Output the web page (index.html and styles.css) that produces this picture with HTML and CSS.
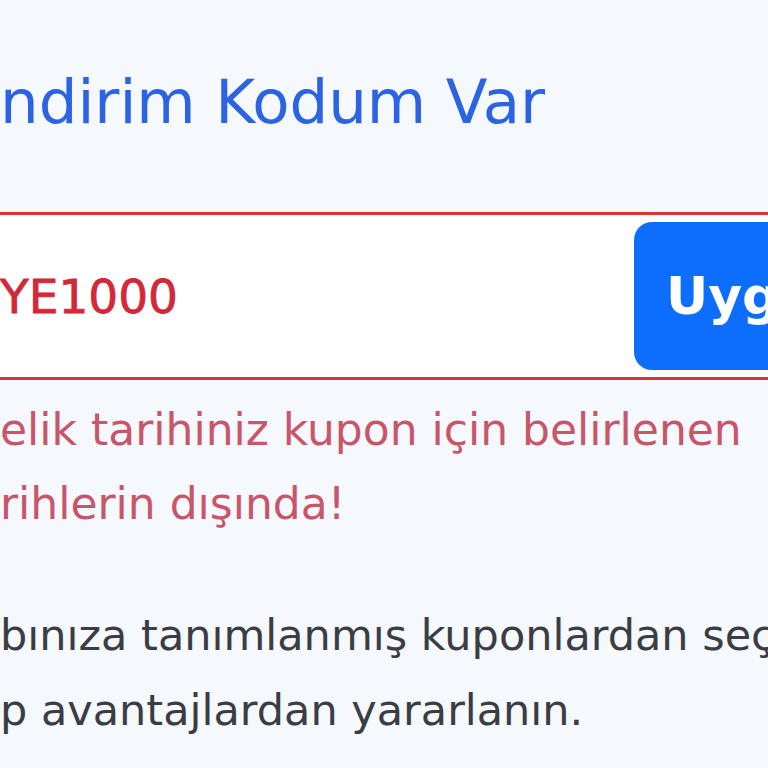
FILE: index.html
```html
<!DOCTYPE html>
<html lang="tr">
<head>
<meta charset="utf-8">
<link rel="stylesheet" href="styles.css">
</head>
<body>
<div class="page">
  <h2 class="title">ndirim Kodum Var</h2>
  <div class="coupon">
    <div class="code">YE1000</div>
    <button class="apply">Uygula</button>
  </div>
  <p class="error">elik tarihiniz kupon için belirlenen<br>rihlerin dışında!</p>
  <p class="desc">bınıza tanımlanmış kuponlardan seçip<br>p avantajlardan yararlanın.</p>
</div>
</body>
</html>
```
FILE: styles.css
```css
html, body {
  margin: 0;
  padding: 0;
  background: #f5f8fc;
  overflow: hidden;
  width: 768px;
  height: 768px;
}
.page {
  font-family: "DejaVu Sans", sans-serif;
  width: 1000px;
  padding-top: 62px;
}
.title {
  margin: 0;
  font-size: 61px;
  font-weight: 500;
  color: #2b63e3;
  line-height: 80px;
  white-space: nowrap;
}
.coupon {
  margin-top: 70px;
  margin-left: -20px;
  height: 162px;
  border-top: 3px solid #d8343c;
  border-bottom: 3px solid #d8343c;
  background: #ffffff;
  display: flex;
  align-items: center;
  padding-left: 20px;
}
.code {
  width: 634px;
  font-size: 47px;
  font-weight: 500;
  color: #d3283a;
  white-space: nowrap;
  -webkit-text-stroke: 0.8px #d3283a;
}
.apply {
  height: 148px;
  width: 260px;
  border: 0;
  border-radius: 18px;
  background: #0d6efd;
  color: #ffffff;
  font-family: "DejaVu Sans", sans-serif;
  font-size: 52px;
  font-weight: 700;
  text-align: left;
  padding-left: 32px;
}
.error {
  margin: 13px 0 0 0;
  font-size: 44px;
  line-height: 74px;
  color: #c8566a;
  white-space: nowrap;
}
.desc {
  margin: 57px 0 0 0;
  font-size: 43px;
  line-height: 75px;
  color: #3a3d44;
  white-space: nowrap;
}
```
